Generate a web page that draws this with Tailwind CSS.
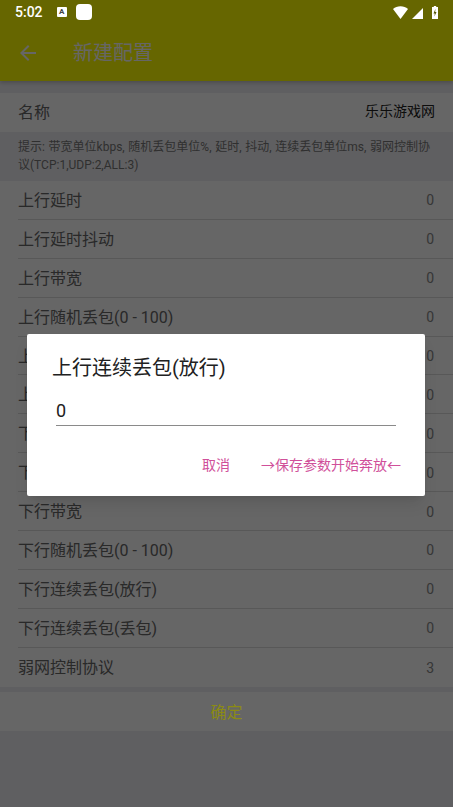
<!DOCTYPE html>
<html><head><meta charset="utf-8">
<script src="https://cdn.jsdelivr.net/npm/@tailwindcss/browser@4"></script>
</head>
<body class="m-0">
<div class="relative w-[453px] h-[807px] overflow-hidden bg-[#eeeef2] font-['Roboto','Noto_Sans_CJK_SC',sans-serif]">
  <header class="relative h-[81px] bg-[#ffff00] pt-[25px] flex items-center shadow-[0_2px_4px_rgba(0,0,0,0.2)]">
    <svg class="ml-[16px] w-[24px] h-[24px]" viewBox="0 0 24 24"><path d="M20 11H7.830l5.590-5.590L12 4l-8 8 8 8 1.410-1.410L7.830 13H20z" fill="#fff"/></svg>
    <span class="ml-[33px] text-[20px] text-white leading-none">新建配置</span>
  </header>
  <div class="mt-[12px] bg-white h-[38.500px] px-[18px] flex items-center justify-between">
    <span class="text-[16px] text-[#666] pt-[1px]">名称</span>
    <span class="text-[14px] text-[#222] pb-[1px]">乐乐游戏网</span>
  </div>
  <p class="h-[49.500px] px-[18px] pt-[6.500px] text-[12px] leading-[18px] text-[#777] m-0 [word-spacing:0.7px]">提示: 带宽单位kbps, 随机丢包单位%, 延时, 抖动, 连续丢包单位ms, 弱网控制协议(TCP:1,UDP:2,ALL:3)</p>
  <ul class="bg-white m-0 p-0 list-none">
    <li class="h-[38.900px] ml-[18px] pr-[19px] pt-[2px] flex items-center justify-between border-b border-[#ddd]"><span class="text-[16px] text-[#666]">上行延时</span><span class="text-[14px] text-[#888]">0</span></li>
    <li class="h-[38.900px] ml-[18px] pr-[19px] pt-[2px] flex items-center justify-between border-b border-[#ddd]"><span class="text-[16px] text-[#666]">上行延时抖动</span><span class="text-[14px] text-[#888]">0</span></li>
    <li class="h-[38.900px] ml-[18px] pr-[19px] pt-[2px] flex items-center justify-between border-b border-[#ddd]"><span class="text-[16px] text-[#666]">上行带宽</span><span class="text-[14px] text-[#888]">0</span></li>
    <li class="h-[38.900px] ml-[18px] pr-[19px] pt-[2px] flex items-center justify-between border-b border-[#ddd]"><span class="text-[16px] text-[#666]">上行随机丢包(0 - 100)</span><span class="text-[14px] text-[#888]">0</span></li>
    <li class="h-[38.900px] ml-[18px] pr-[19px] pt-[2px] flex items-center justify-between border-b border-[#ddd]"><span class="text-[16px] text-[#666]">上行连续丢包(放行)</span><span class="text-[14px] text-[#888]">0</span></li>
    <li class="h-[38.900px] ml-[18px] pr-[19px] pt-[2px] flex items-center justify-between border-b border-[#ddd]"><span class="text-[16px] text-[#666]">上行连续丢包(丢包)</span><span class="text-[14px] text-[#888]">0</span></li>
    <li class="h-[38.900px] ml-[18px] pr-[19px] pt-[2px] flex items-center justify-between border-b border-[#ddd]"><span class="text-[16px] text-[#666]">下行延时</span><span class="text-[14px] text-[#888]">0</span></li>
    <li class="h-[38.900px] ml-[18px] pr-[19px] pt-[2px] flex items-center justify-between border-b border-[#ddd]"><span class="text-[16px] text-[#666]">下行延时抖动</span><span class="text-[14px] text-[#888]">0</span></li>
    <li class="h-[38.900px] ml-[18px] pr-[19px] pt-[2px] flex items-center justify-between border-b border-[#ddd]"><span class="text-[16px] text-[#666]">下行带宽</span><span class="text-[14px] text-[#888]">0</span></li>
    <li class="h-[38.900px] ml-[18px] pr-[19px] pt-[2px] flex items-center justify-between border-b border-[#ddd]"><span class="text-[16px] text-[#666]">下行随机丢包(0 - 100)</span><span class="text-[14px] text-[#888]">0</span></li>
    <li class="h-[38.900px] ml-[18px] pr-[19px] pt-[2px] flex items-center justify-between border-b border-[#ddd]"><span class="text-[16px] text-[#666]">下行连续丢包(放行)</span><span class="text-[14px] text-[#888]">0</span></li>
    <li class="h-[38.900px] ml-[18px] pr-[19px] pt-[2px] flex items-center justify-between border-b border-[#ddd]"><span class="text-[16px] text-[#666]">下行连续丢包(丢包)</span><span class="text-[14px] text-[#888]">0</span></li>
    <li class="h-[38.900px] ml-[18px] pr-[19px] pt-[2px] flex items-center justify-between"><span class="text-[16px] text-[#666]">弱网控制协议</span><span class="text-[14px] text-[#888]">3</span></li>
  </ul>
  <div class="mt-[5.300px] h-[39px] pt-[4px] bg-white flex items-center justify-center"><span class="relative z-10 text-[16px] text-[#8b8b14]">确定</span></div>

  <div class="absolute inset-0 bg-black/60"></div>

  <div class="absolute top-0 left-0 right-0 h-[24px] flex items-center text-white pl-[15px] pr-[15px]">
    <span class="text-[14px] font-medium leading-none">5:02</span>
    <span class="ml-[14px] w-[10px] h-[10px] bg-white rounded-[1px] flex items-center justify-center text-[8px] font-bold leading-none text-[#444]">A</span>
    <span class="ml-[9px] w-[16px] h-[16px] bg-white rounded-[4px]"></span>
    <svg class="ml-auto w-[15px] h-[13px]" viewBox="0 0 15 13"><path d="M0 3C2 1.200 4.600.2 7.500.2S13 1.200 15 3L7.500 13z" fill="#fff"/></svg>
    <svg class="ml-[4px] w-[11px] h-[11px] mt-[2px]" viewBox="0 0 11 11"><path d="M11 0v11H0z" fill="#fff"/></svg>
    <svg class="ml-[9px] w-[6px] h-[13px]" viewBox="0 0 6 13"><path d="M1.800 0h2.400v1H6v12H0V1h1.800z" fill="#fff"/><path d="M3.400 3 1.500 7.400h1.300L2.400 10.500 4.500 6H3.200z" fill="#555500"/></svg>
  </div>

  <div class="absolute left-[27px] top-[334px] w-[398px] h-[162px] bg-white rounded-[2px] shadow-lg">
    <h2 class="m-0 absolute left-[25px] top-[20px] text-[20px] leading-[28px] font-normal text-[#212121]">上行连续丢包(放行)</h2>
    <div class="absolute left-[29px] top-[65px] w-[340px] h-[27px] border-b border-[#8a8a8a] text-[18px] leading-[24px] text-[#212121]">0</div>
    <div class="absolute right-[24px] top-[121px] flex gap-[31px] text-[14px] leading-[20px] text-[#d0509a]">
      <span>取消</span><span>→保存参数开始奔放←</span>
    </div>
  </div>
</div>
</body></html>
